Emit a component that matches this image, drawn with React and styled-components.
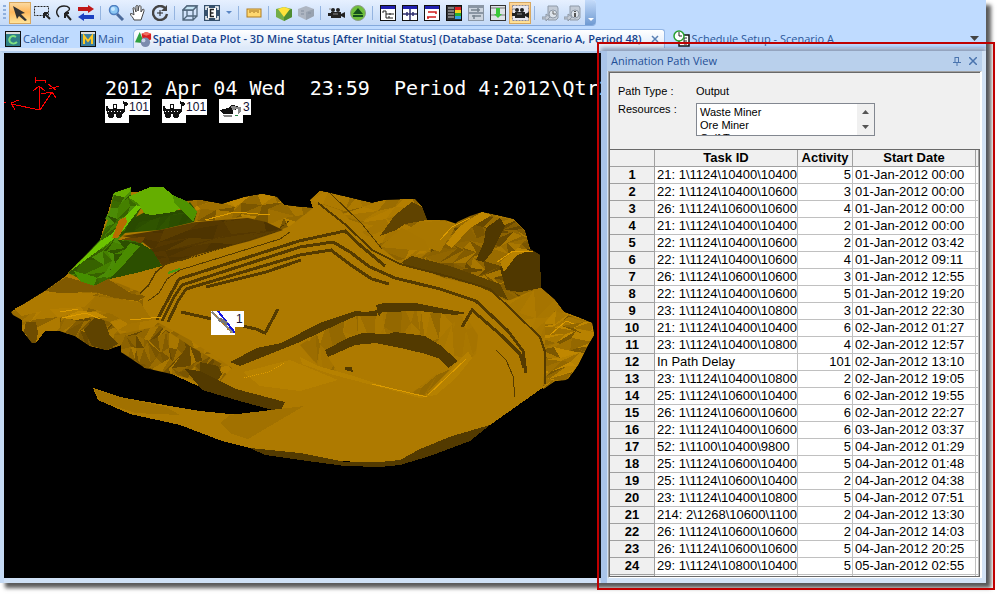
import React, { useState } from "react";
import styled, { createGlobalStyle } from 'styled-components';

const rows = [
  ["21: 1\\1124\\10400\\10400", 5, "01-Jan-2012 00:00"],
  ["22: 1\\1124\\10400\\10600", 3, "01-Jan-2012 00:00"],
  ["26: 1\\1124\\10600\\10600", 4, "01-Jan-2012 00:00"],
  ["21: 1\\1124\\10400\\10400", 2, "01-Jan-2012 00:00"],
  ["22: 1\\1124\\10400\\10600", 2, "01-Jan-2012 03:42"],
  ["22: 1\\1124\\10400\\10600", 4, "01-Jan-2012 09:11"],
  ["26: 1\\1124\\10600\\10600", 3, "01-Jan-2012 12:55"],
  ["22: 1\\1124\\10400\\10600", 5, "01-Jan-2012 19:20"],
  ["23: 1\\1124\\10400\\10800", 3, "01-Jan-2012 22:30"],
  ["21: 1\\1124\\10400\\10400", 6, "02-Jan-2012 01:27"],
  ["23: 1\\1124\\10400\\10800", 4, "02-Jan-2012 12:57"],
  ["In Path Delay", 101, "02-Jan-2012 13:10"],
  ["23: 1\\1124\\10400\\10800", 2, "02-Jan-2012 19:05"],
  ["25: 1\\1124\\10600\\10400", 6, "02-Jan-2012 19:55"],
  ["26: 1\\1124\\10600\\10600", 6, "02-Jan-2012 22:27"],
  ["22: 1\\1124\\10400\\10600", 6, "03-Jan-2012 03:37"],
  ["52: 1\\1100\\10400\\9800", 5, "04-Jan-2012 01:29"],
  ["25: 1\\1124\\10600\\10400", 5, "04-Jan-2012 01:48"],
  ["25: 1\\1124\\10600\\10400", 2, "04-Jan-2012 04:38"],
  ["23: 1\\1124\\10400\\10800", 5, "04-Jan-2012 07:51"],
  ["214: 2\\1268\\10600\\1100", 2, "04-Jan-2012 13:30"],
  ["26: 1\\1124\\10600\\10600", 2, "04-Jan-2012 14:03"],
  ["26: 1\\1124\\10600\\10600", 5, "04-Jan-2012 20:25"],
  ["29: 1\\1124\\10800\\10400", 5, "05-Jan-2012 02:55"],
]

const CameraShape = () => (
  <g fill="#222">
    <circle cx="5" cy="5" r="2" /><circle cx="10" cy="5" r="2" />
    <rect x="3" y="7" width="10" height="6" /><path d="M13 9l4-2v6l-4-2z" /><rect x="0" y="8" width="3" height="3" />
    <path d="M1 4h2M5 9h5" stroke="#888" />
  </g>
)

const WindowShape = ({ children, bar = "#2020b0" }) => (
  <g>
    <rect x=".5" y=".5" width="15" height="15" fill="#fff" stroke="#111" />
    <rect x="1" y="1" width="14" height="3" fill={bar} />
    {children}
  </g>
)

const GreyServer = ({ children }) => (
  <g fill="#c3cbd6" stroke="#8f9aa8">
    <path d="M6 1h9l1 2v10l-2 2H6z" /><path d="M0 12h4V9l4 3-4 4v-2H0z" />
    <circle cx="11" cy="9" r="4" fill="#dde3ea" />{children}
  </g>
)

const icons = {
  select: <path d="M1 1l12 7-4 1 6 6-2 1-6-5-2 3z" fill="#333" />,
  marquee: <g fill="none" stroke="#222"><rect x=".5" y="1.5" width="14" height="9" strokeDasharray="2 1" /><path d="M10 8l6 6M10 8v5M10 8h4" strokeWidth="2" /></g>,
  lasso: <g fill="none" stroke="#222"><path d="M3 12C-2 7 2 1 8 1c5 0 7 3 4 5l-3 2" strokeWidth="1.4" /><path d="M9 8l6 7M9 8v5M9 8h4" strokeWidth="2" /></g>,
  swap: <g><path d="M0 2h10V0l6 4-6 4V6H0z" fill="#c01818" /><path d="M16 10H6V8l-6 4 6 4v-2h10z" fill="#1b3fc0" /></g>,
  zoom: <g><path d="M9 9l6 6" stroke="#4b6a9a" strokeWidth="3" /><circle cx="6" cy="5" r="4.5" fill="#8cc8f4" stroke="#4f7fc0" strokeWidth="1.5" /><circle cx="5" cy="4" r="2" fill="#c8e8ff" /></g>,
  pan: <path d="M4 15c-1-3-3-4-4-6 1-1 3 0 4 1L3 3c1-1 2 0 2 1l1 3V1c1-1 2-1 2 0v5l1-5c1-1 2 0 2 1v5l2-3c1 0 1 1 1 2l-2 6-1 3z" fill="#fff" stroke="#444" />,
  orbit: <g fill="none" stroke="#444"><path d="M13 3A7 7 0 1 0 15 9" strokeWidth="2.4" /><path d="M15 0v6H9z" fill="#444" stroke="none" /><path d="M8 5v6M5 8h6" stroke="#222" /></g>,
  cube: <g fill="none" stroke="#51677c" strokeWidth="1.3"><path d="M1 5h10v10H1zM5 1h10v10H5zM1 5l4-4M11 5l4-4M11 15l4-4M1 15l4-4" /><path d="M5 1h10l-4 4H1z" fill="#c4e4f4" /></g>,
  extent: <g><rect width="16" height="16" fill="#35506c" /><path d="M2 5V2h3M11 2h3v3M14 11v3h-3M5 14H2v-3" stroke="#fff" fill="none" strokeWidth="1.5" /><rect x="4" y="3" width="8" height="10" fill="#fff" /><path d="M10 4.500H6.500v7H10M6 8h3.500" stroke="#222" strokeWidth="1.5" fill="none" /></g>,
  ruler: <g><rect x="1" y="4" width="14" height="8" fill="#ffd870" stroke="#b07c20" /><path d="M4 5v3M6 5v2M8 5v3M10 5v2M12 5v3" stroke="#a07020" /></g>,
  block: <g><path d="M0 4l8-2 8 2v8l-8 4-8-4z" fill="#73ad48" /><path d="M8 7l8-3v8l-8 4z" fill="#4e8d33" /><path d="M2 4l6-2 6 2-6 8z" fill="#ffe23a" /></g>,
  greyBlock: <g><path d="M0 4l8-3 8 3v7l-8 4-8-4z" fill="#aeb6c2" /><path d="M8 7l8-3v7l-8 4z" fill="#98a2b0" /><path d="M3 6h3M3 9h3M10 8h3" stroke="#838e9e" /></g>,
  camera: <CameraShape />,
  eject: <g><circle cx="8" cy="8" r="7.500" fill="#6fbf3c" stroke="#8c9c88" /><path d="M8 3l5 6H3zM3 10h10v2H3z" fill="#14501c" /></g>,
  tree: <WindowShape><path d="M3 6h3v3h5M6 9v4h7M3 6v2M9 9h5M9 11v2" stroke="#222" fill="none" /></WindowShape>,
  split: <WindowShape><path d="M8 4v11M1 9h14M5 7v4M11 7v4" stroke="#303070" fill="none" strokeWidth="1.5" /></WindowShape>,
  route: <WindowShape><path d="M4 7h8v2M12 12H4v2M3 12h9" stroke="#d01c1c" fill="none" strokeWidth="1.5" /></WindowShape>,
  legend: <g><rect x=".5" y=".5" width="15" height="15" fill="#333" stroke="#111" /><path d="M2 3h6M2 6h6M2 9h6M2 12h6" stroke="#ccc" /><path d="M9 2h6v3H9z" fill="#e02020" /><path d="M9 5h6v3H9z" fill="#f4d020" /><path d="M9 8h6v3H9z" fill="#28b030" /><path d="M9 11h6v3H9z" fill="#30a0e0" /></g>,
  greyWin: <g><rect x=".5" y=".5" width="15" height="15" fill="#ccd4de" stroke="#8a96a4" /><path d="M1 2h14M1 8h14" stroke="#8a96a4" strokeWidth="2" /><path d="M3 5h9M4 11h9M10 3v4M6 10v4" stroke="#76828f" strokeWidth="1.5" /></g>,
  download: <g><rect x=".5" y=".5" width="15" height="15" fill="#dde2e6" stroke="#333" /><path d="M1 3h14M1 10h14" stroke="#777" /><path d="M6 3h4v6h2l-4 4-4-4h2z" fill="#3ac838" /></g>,
  animate: <g><rect x=".5" y=".5" width="16" height="15" fill="#e8e8f0" stroke="#889" strokeDasharray="2 1" /><CameraShape /></g>,
  clock: <GreyServer><path d="M11 6v3h3" stroke="#666" fill="none" /></GreyServer>,
  info: <GreyServer><path d="M11 6v1M11 8v4" stroke="#555" strokeWidth="2" /></GreyServer>,
}

const toolGroups = [
  ["select", "marquee", "lasso", "swap"],
  ["zoom", "pan", "orbit"],
  ["cube", "extent", "more"],
  ["ruler"],
  ["block", "greyBlock"],
  ["camera", "eject"],
  ["tree", "split", "route", "legend", "greyWin", "download", "animate"],
  ["clock", "info"],
]

// small seeded generator so the mesh keeps the same facets on every render
const makeRandom = (seed) => () => {
  seed = (seed * 16807) % 2147483647
  return seed / 2147483647
}

const makeFacets = (x0, y0, x1, y1, w, h, skew, palette, seed) => {
  const rand = makeRandom(seed)
  const cols = Math.ceil((x1 - x0) / w) + 1
  const lines = Math.ceil((y1 - y0) / h) + 1
  const pts = []
  for (let j = 0; j <= lines; j++) {
    const line = []
    for (let i = -2; i <= cols + 2; i++) {
      line.push([
        Math.round(x0 + i * w + (rand() - 0.5) * w - (j * h * skew) % (w * 2)),
        Math.round(y0 + (j - 0.5) * h + (rand() - 0.5) * h),
      ])
    }
    pts.push(line)
  }
  const out = []
  for (let j = 0; j < lines; j++) {
    for (let i = 0; i < pts[0].length - 1; i++) {
      const [a, b, c, d] = [pts[j][i], pts[j][i + 1], pts[j + 1][i + 1], pts[j + 1][i]]
      out.push({ points: [a, b, d].join(" "), fill: palette[Math.floor(rand() * palette.length)] })
      out.push({ points: [b, c, d].join(" "), fill: palette[Math.floor(rand() * palette.length)] })
    }
  }
  return out
}

const ochre = ["#ae7a00", "#ae7a00", "#a67400", "#9a6c00", "#8e6300", "#b47e00"]
const umber = ["#7a5500", "#8c6200", "#845c00", "#9a6c00", "#a97700", "#694900", "#926600"]
const ridge = ["#a97700", "#b88200", "#946800", "#a07000", "#7c5700", "#c08700"]
const slope = ["#a97700", "#ae7a00", "#a67400", "#b07c00"]
const wall = ["#a97700", "#9c6d00", "#a67400", "#946800", "#ae7a00"]
const moss = ["#2f5400", "#3a6a00", "#458000", "#4b8c06", "#376200"]
const deepMoss = ["#294a00", "#2f5400", "#2b4e00"]
const earth = ["#553800", "#4e3400", "#5c3e00"]

const meshes = [
  { id: "west", area: "11,312 45,291 66,276 95,286 108,279 140,292 145,302 157,322 190,340 220,360 232,368 214,388 180,376 165,370 145,368 133,357 121,352 121,345 107,350 90,346 75,336 60,331 45,331 36,335 36,343 32,343 22,330 22,320 13,315", box: [10, 272, 235, 392], cell: [21, 11], skew: 0.4, palette: ochre, seed: 71 },
  { id: "westlow", area: "60,318 78,312 92,316 110,322 120,334 160,326 190,346 222,364 215,386 180,376 145,368 121,352 121,345 107,350 90,346 75,336 60,331", box: [50, 306, 230, 392], cell: [7, 12], skew: 0.7, palette: umber, seed: 913 },
  { id: "north", area: "175,197 186,201 200,200 222,204 245,197 262,194 277,197 284,205 300,207 313,208 290,226 280,230 265,223 245,216 225,220 195,223 190,210", box: [174, 190, 315, 232], cell: [15, 9], skew: 0.2, palette: ridge, seed: 37 },
  { id: "crest", area: "310,200 320,191 330,193 355,199 372,203 385,200 415,199 422,207 427,220 445,220 457,224 440,250 430,268 400,263 384,250 360,230 340,210", box: [308, 188, 460, 270], cell: [17, 12], skew: 0.8, palette: ochre, seed: 411 },
  { id: "mountain", area: "430,250 450,232 457,222 470,216 482,212 500,216 513,219 525,231 530,249 540,255 540,287 555,300 520,306 505,300 480,286 445,278 412,266", box: [410, 208, 558, 310], cell: [11, 8], skew: 1.4, palette: umber, seed: 58 },
  { id: "east", area: "540,287 555,300 564,312 580,318 592,323 594,335 588,345 578,365 568,379 555,381 543,389 545,360 540,340 506,302", box: [505, 285, 596, 392], cell: [22, 17], skew: 0.5, palette: slope, seed: 600 },
  { id: "scree", area: "545,322 555,311 592,323 594,335 588,345 578,365 566,380 555,381 543,389 545,350", box: [540, 310, 596, 392], cell: [12, 7], skew: 1, palette: ridge, seed: 29 },
  { id: "pitwall", area: "300,345 335,323 356,316 378,312 380,307 402,303 440,311 466,317 478,335 476,354 460,366 428,396 412,393 452,362 440,344 424,337 390,334 362,333 326,354 338,373 318,366", box: [298, 300, 480, 398], cell: [10, 22], skew: 0.7, palette: wall, seed: 82 },
  { id: "greenhill", area: "68,273 100,240 108,220 105,219 110,210 113,195 114,193 131,187 131,197 142,206 130,228 118,240 145,240 112,278 96,286", box: [66, 186, 146, 288], cell: [9, 9], skew: 0.9, palette: moss, seed: 15 },
  { id: "greenface", area: "130,220 145,212 180,210 190,202 197,212 194,222 160,230 124,233", box: [120, 200, 200, 236], cell: [10, 12], skew: 0.4, palette: deepMoss, seed: 9 },
  { id: "valley", area: "122,236 160,230 196,222 248,218 266,222 283,230 250,241 200,254 162,266 150,248 140,240", box: [120, 216, 285, 268], cell: [24, 9], skew: 0.5, palette: earth, seed: 77 },
]

const facets = meshes.map(m => ({ ...m, tris: makeFacets(...m.box, ...m.cell, m.skew, m.palette, m.seed) }))

const Terrain = () => (
  <TerrainSvg viewBox="4 53 597 525" preserveAspectRatio="xMinYMin slice" shapeRendering="crispEdges" aria-hidden="true">
    <defs>
      {facets.map(m => <clipPath id={m.id} key={m.id}><polygon points={m.area} /></clipPath>)}
    </defs>
    <polygon fill="#ae7a00" points="11,312 45,291 66,276 68,273 100,240 113,195 150,190 186,201 200,200 222,204 245,197 262,194 277,197 284,205 300,207 313,208 310,200 320,191 330,193 355,199 372,203 385,200 415,199 422,207 427,220 457,224 470,218 482,212 513,219 525,231 530,249 540,255 540,287 555,300 564,312 580,318 592,323 594,335 588,345 578,365 568,379 555,381 541,389 490,425 470,441 430,456 400,463 380,463 340,461 300,457 250,448 222,441 180,425 130,414 98,400 93,388 120,397 170,406 200,411 240,415 278,417 285,402 245,396 200,387 163,370 145,368 133,357 121,352 121,345 107,350 90,346 75,336 60,331 45,331 36,343 32,343 22,330 22,320" />
    {facets.map(m => (
      <g clipPath={`url(#${m.id})`} key={m.id}>
        {m.tris.map((t, i) => <polygon key={i} points={t.points} fill={t.fill} />)}
      </g>
    ))}
    {/* broad light and shade over the mesh */}
    <g>
      <polygon fill="#805900" points="45,291 66,277 96,285 108,279 132,294 146,296 138,301 115,298 95,292 60,293" />
      <polygon fill="#ae7a00" points="14,309 44,294 60,294 95,296 84,307 50,309 22,316" />
      <polygon fill="#a37200" points="95,296 140,302 152,320 128,324 112,314 88,308" />
      <polygon fill="#c48a00" points="62,318 78,311 96,312 108,318 92,317 76,320" />
      <polygon fill="#5f4300" points="84,330 94,318 104,320 110,336 118,344 107,350 92,346" />
      <polygon fill="#6f4d00" points="26,322 36,322 38,333 36,343 32,343 24,332" />
      <polygon fill="#5c4100" points="200,362 218,366 222,374 214,386 200,380" />
      <polygon fill="#604300" points="395,215 412,202 422,207 427,220 405,224 396,230 380,236" />
      <polygon fill="#a97700" points="405,232 418,222 445,221 456,226 440,252 404,240" />
      <polygon fill="#a87600" points="380,247 402,228 425,240 430,252 412,250" />
      <polygon fill="#503800" points="486,228 500,218 505,226 492,252 484,262 476,260 484,242" />
      <polygon fill="#503800" points="500,268 512,252 530,249 540,255 541,288 520,292 506,290" />
      <polygon fill="#5f4300" points="402,262 412,256 450,266 500,284 508,300 480,287 450,277 405,266" />
      <polygon fill="#c08700" points="470,219 482,212 492,215 470,228 452,248 446,244 458,228" />
      <polygon fill="#b88200" points="500,262 518,248 530,250 516,256 504,272" />
    </g>
    {/* waste dump */}
    <g>
      <polygon fill="#65ae00" points="114,193 131,187 130,192 124,197 113,195" />
      <polygon fill="#65ae00" points="128,197 150,187 163,187 173,195 174,203 182,207 174,212 152,215 145,214 138,203" />
      <polygon fill="#4e9200" points="173,195 186,201 197,212 193,222 182,210 174,203" />
      <polygon fill="#6cc400" points="136,205 141,207 134,216 122,232 115,238 68,273 100,241 112,234 122,220" />
      <polygon fill="#b86c00" points="119,220 126,217 127,222 118,238 112,238" />
      <polygon fill="#6e4600" points="118,239 145,237 141,244 135,241" />
      <polygon fill="#2c4f00" points="118,240 140,243 152,250 162,266 140,272 110,279 130,256" />
      <polygon fill="#4a8c00" points="130,243 140,246 126,262 112,276 106,278 116,262" />
      <polygon fill="#459000" points="74,271 96,277 94,286 80,281" />
      <path d="M168 273l12-4" stroke="#4a9a10" strokeWidth="2" />
    </g>
    {/* highwall and ramp */}
    <g fill="none" stroke="#553b00">
      <path d="M140 293l8-7 8-14 10-8 24-7" strokeWidth="1.5" />
      <path d="M148 301l11-8 8-14 13-9 100-31 10-7" />
      <path d="M181 261l9-3 85-26 15-12" strokeDasharray="2 1" />
      <path d="M157 320l16-30 6-11 120-38 46-10 16 15 24 20" strokeWidth="3" />
      <path d="M162 321l12-24 8-12 118-38 33-5 17 10 20 15 25 11 45 11 36 12 32 30 15 20 3 22" strokeWidth="3" />
      <path d="M168 322l10-21 8-12 114-34 31-5 21 16 20 13 17 5" strokeWidth="3" />
      <path d="M206 287l60-15 35-12" strokeWidth="3" />
      <path d="M318 203l28 22 26 25 28 14 50 13 40 12 50 48 5 15v32" strokeWidth="2" />
      <path d="M330 193l32 31 20 25" />
      <path d="M462 327l10-17 30 26 18 18 4 14" strokeWidth="3" />
      <path d="M496 350l10 10 7 16 2 21" />
      <path d="M181 312l75 17 9 4 13-24" strokeWidth="3" />
    </g>
    {/* pit */}
    <g fill="#533a00">
      <polygon points="230,362 257,348 281,343 320,323 355,311 366,312 378,310 377,316 356,316 338,324 300,342 270,354 240,366" />
      <polygon points="376,305 384,303 415,303 440,308 467,313 455,315 420,311 382,312 379,317" />
      <polygon points="325,350 350,337 362,333 388,334 395,332 425,336 440,345 458,361 448,368 440,359 426,354 405,349 376,343 355,345 328,357" />
      <polygon points="185,369 200,371 236,389 285,402 280,412 243,402 202,390" />
      <polygon points="250,448 300,453 345,462 380,462 400,460 420,449 452,436 490,425 470,441 430,456 400,465 380,467 345,466 300,460 265,455" />
      <polygon points="345,367 352,367 353,372 345,370" />
    </g>
    <g fill="#b68100">
      <polygon points="300,357 318,366 350,375 396,390 426,396 468,351 472,358 456,378 436,395 420,398 372,385 330,374 302,364" />
      <polygon points="243,372 290,360 338,380 300,391 260,386" />
    </g>
    <g fill="none" stroke="#dc9b00">
      <path d="M428 395l38-36M372 384l55 13M130 320l32-3M62 318l24-5 14 6M60 312l18-3" />
      <path d="M244 378l24-6 16-9" strokeDasharray="1 1" />
      <path d="M205 220l30-8 35 3M440 240l12-13 18-9M497 262l16-11 20 1M550 335l16-14 8 3" />
    </g>
    <polygon fill="#a17100" points="220,423 230,415 304,406 248,439 232,434" />
    <polygon fill="#a17100" points="94,389 120,397 166,407 180,415 135,413 100,401" />
    {/* axes */}
    <g fill="none" stroke="#f00">
      <path d="M39 110V87M33 91l6-5 6 5M40 110L11 104M19 100l-8 3 4 7M4 102h2M40 110l12-18M41 94l11-2 4 6M35 77v6M36 80h9v3M48 84l8 6M49 89l10-3" />
    </g>
  </TerrainSvg>
)

const Truck = () => (
  <svg width="24" height="24" viewBox="0 0 24 24" shapeRendering="crispEdges">
    <path fill="#111" d="M1 7h2l1 3h4V5h4v5h7V5h-1V2l5 2v2l-3 1v5l-2 3H2v-3H1z" />
    <path fill="#fff" d="M9 6h2v3H9z" />
    <path d="M3 12h14" stroke="#fff" strokeDasharray="1 2" />
    <circle cx="6" cy="16" r="3" fill="#111" /><circle cx="14" cy="16" r="3" fill="#111" />
  </svg>
)

const Shovel = () => (
  <svg width="24" height="24" viewBox="0 0 24 24" shapeRendering="crispEdges">
    <path fill="#111" d="M1 11l8-2 4-3 6 1v3l-5 1v4H4z" /><path fill="#888" d="M12 7l10 1v5l-3 2v-5l-6 1zM3 16h10v2H5z" /><path d="M16 16h3" stroke="#284" />
  </svg>
)

const Drill = () => (
  <svg width="24" height="24" viewBox="0 0 24 24" shapeRendering="crispEdges">
    <path d="M1 1l21 21" stroke="#888" strokeWidth="2" /><path d="M7 0l17 22" stroke="#1414e0" strokeWidth="2" /><path d="M8 8l8 5" stroke="#777" strokeWidth="4" /><path d="M4 3l16 19" stroke="#b87c20" strokeDasharray="3 3" />
  </svg>
)

const App = () => {
  const [tab, setTab] = useState("plot")

  return (
    <Screen>
      <GlobalStyle />
      <Window>
        <ToolBar role="toolbar" aria-label="View tools">
          <Grip />
          {toolGroups.map((group, index) => (
            <ToolGroup key={index}>
              {group.map(name => name === "more"
                ? <MoreButton key={name} aria-label="More"><Caret /></MoreButton>
                : (
                  <ToolButton key={name} aria-label={name} $active={name === "select" || name === "animate"}>
                    <svg width="17" height="16" viewBox="0 0 17 16">{icons[name]}</svg>
                  </ToolButton>
                ))}
            </ToolGroup>
          ))}
          <Overflow aria-label="Toolbar options"><Caret $light /></Overflow>
        </ToolBar>

        <TabBar role="tablist">
          <Tab role="tab" onClick={() => setTab("calendar")}>
            <svg width="16" height="16" viewBox="0 0 16 16"><rect x=".5" y=".5" width="15" height="15" fill="#2f7f86" stroke="#111" /><path d="M1 2h14" stroke="#ddd" strokeWidth="2" /><path d="M11 6C6 3 3 8 5 11c2 2 5 2 7 0" stroke="#7de080" strokeWidth="2" fill="none" /></svg>
            Calendar
          </Tab>
          <Tab role="tab" $gap onClick={() => setTab("main")}>
            <svg width="16" height="16" viewBox="0 0 16 16"><rect x=".5" y=".5" width="15" height="15" fill="#3d7f9c" stroke="#111" /><path d="M1 2h14" stroke="#ddd" strokeWidth="2" /><path d="M4 13V5l4 5 4-5v8" stroke="#ffc820" strokeWidth="2" fill="none" /></svg>
            Main
          </Tab>
          <ActiveTab role="tab" aria-selected={tab === "plot"} onClick={() => setTab("plot")}>
            <svg width="17" height="17" viewBox="0 0 18 18"><path d="M5 1l5 12-10-1z" fill="#2fa040" /><path d="M7 3l5-2 5 2v6l-5 2-4-2z" fill="#d82020" /><path d="M7 3l5-2 5 2-5 2z" fill="#f07060" /><circle cx="11" cy="12" r="5" fill="#7c8cae" /><circle cx="9" cy="10" r="2" fill="#c8d2e6" /></svg>
            <span>Spatial Data Plot - 3D Mine Status [After Initial Status] (Database Data: Scenario A, Period 48)</span>
            <svg width="8" height="8" viewBox="0 0 8 8"><path d="M1 1l6 6M7 1L1 7" stroke="#5a80b4" strokeWidth="1.5" /></svg>
          </ActiveTab>
          <Tab role="tab" onClick={() => setTab("schedule")}>
            <svg width="17" height="17" viewBox="0 0 17 17"><rect x="6" y="5" width="10" height="11" fill="#fff" stroke="#111" strokeWidth="1.5" /><path d="M14 8h-3v6h3M11 11h3" stroke="#222" fill="none" /><circle cx="6" cy="6" r="5" fill="#fff" stroke="#28a030" strokeWidth="1.5" /><path d="M6 2v4h3" stroke="#222" fill="none" /></svg>
            Schedule Setup - Scenario A
          </Tab>
          <TabMenu aria-label="Window list"><svg width="9" height="5" viewBox="0 0 9 5"><path d="M0 0h9L4.500 5z" fill="#444" /></svg></TabMenu>
        </TabBar>

        <Workspace>
          <Viewport>
            <Terrain />
            <Readout>
              <Clock>{"2012 Apr 04 Wed  23:59  Period 4:2012\\Qtr2"}</Clock>
              <Fleet>
                <Unit><Truck /><span>101</span></Unit>
                <Unit><Truck /><span>101</span></Unit>
                <Unit><Shovel /><span>3</span></Unit>
              </Fleet>
            </Readout>
            <DrillUnit><Drill /><span>1</span></DrillUnit>
          </Viewport>

          <Dock>
            <DockHead>
              <h2>Animation Path View</h2>
              <button aria-label="Pin"><svg width="8" height="9" viewBox="0 0 8 9"><path d="M2 0v5M5.500 0v5M2 .5h4M0 5.500h8M4 6v3" stroke="#4a74ae" fill="none" /></svg></button>
              <button aria-label="Close"><svg width="8" height="8" viewBox="0 0 8 8"><path d="M0 0l8 8M8 0L0 8" stroke="#4a74ae" strokeWidth="1.5" /></svg></button>
            </DockHead>
            <DockBody>
              <Form>
                <span>Path Type :</span>
                <span>Output</span>
                <label htmlFor="resources">Resources :</label>
                <ListBox>
                  <select id="resources" multiple size="3">
                    <option>Waste Miner</option>
                    <option>Ore Miner</option>
                    <option>Golf T</option>
                  </select>
                  <Scroller>
                    <button aria-label="Scroll up"><svg width="7" height="4" viewBox="0 0 7 4"><path d="M0 4h7L3.500 0z" fill="#555" /></svg></button>
                    <button aria-label="Scroll down"><svg width="7" height="4" viewBox="0 0 7 4"><path d="M0 0h7L3.500 4z" fill="#555" /></svg></button>
                  </Scroller>
                </ListBox>
              </Form>
              <GridBox>
                <PathTable>
                  <colgroup>
                    <col width="45" /><col width="143" /><col width="55" /><col width="123" /><col />
                  </colgroup>
                  <thead>
                    <tr><th></th><th>Task ID</th><th>Activity</th><th>Start Date</th><th></th></tr>
                  </thead>
                  <tbody>
                    {rows.map(([task, activity, start], index) => (
                      <tr key={index}>
                        <th scope="row">{index + 1}</th>
                        <td>{task}</td>
                        <td className="num">{activity}</td>
                        <td>{start}</td>
                        <td></td>
                      </tr>
                    ))}
                    <tr><th></th><td></td><td></td><td></td><td></td></tr>
                  </tbody>
                </PathTable>
              </GridBox>
            </DockBody>
            <Highlight />
          </Dock>
        </Workspace>
      </Window>
    </Screen>
  )
}

const GlobalStyle = createGlobalStyle`
  *{
    box-sizing: border-box;
  }
  body{
    margin: 0;
    background: #fff;
    overflow: hidden;
  }
  button{
    border: 0;
    padding: 0;
    margin: 0;
    background: none;
    font: inherit;
    color: inherit;
  }
  svg{
    display: block;
    flex: none;
  }
`;

const Screen = styled.div`
  height: 100vh;
  padding: 0 16px 15px 0;
  font-family: "Open Sans", sans-serif;
`;

const Window = styled.div`
  height: 100%;
  display: flex;
  flex-direction: column;
  background: #bfdbff;
  box-shadow: 5px 5px 4px rgba(0, 0, 0, 0.65);
`;

const ToolBar = styled.div`
  align-self: flex-start;
  height: 26px;
  display: flex;
  align-items: center;
  background: linear-gradient(#e6f0ff, #d3e4fb 50%, #c3d9f7);
  border-bottom: 1px solid #84a9dc;
  border-radius: 0 4px 4px 0;
`;

const Grip = styled.div`
  width: 3px;
  height: 16px;
  margin: 0 3px;
  background: repeating-linear-gradient(#8fb0de 0 2px, transparent 2px 4px);
`;

const ToolGroup = styled.div`
  display: flex;
  align-items: center;
  & + &::before{
    content: "";
    width: 1px;
    height: 14px;
    margin: 0 4px 0 3px;
    background: #94b4e0;
  }
`;

const ToolButton = styled.button`
  width: 22px;
  height: 22px;
  display: flex;
  align-items: center;
  justify-content: center;
  border: 1px solid ${({ $active }) => $active ? "#d8a860" : "transparent"};
  background: ${({ $active }) => $active ? "linear-gradient(#fbd9a0, #ffb85c 45%, #ffe49a)" : "none"};
`;

const MoreButton = styled.button`
  width: 12px;
  height: 22px;
  display: flex;
  align-items: center;
  justify-content: center;
`;

const Caret = styled.i`
  border: 3px solid transparent;
  border-top-color: ${({ $light }) => $light ? "#fff" : "#5a86c4"};
  border-bottom: 0;
`;

const Overflow = styled.button`
  width: 11px;
  height: 25px;
  display: flex;
  align-items: flex-end;
  justify-content: center;
  margin-left: 2px;
  padding-bottom: 4px;
  background: linear-gradient(#c4dbfa, #6f9ad2);
  border-radius: 0 4px 4px 0;
`;

const TabBar = styled.div`
  flex: none;
  height: 25px;
  display: flex;
  align-items: center;
  padding: 3px 7px 0 5px;
  border-bottom: 3px solid #dde9f9;
  font-size: 11px;
  line-height: 16px;
  color: #2a5699;
`;

const Tab = styled.button`
  display: flex;
  align-items: center;
  gap: 2px;
  margin-left: ${({ $gap }) => $gap ? "11px" : "0"};
  white-space: nowrap;
`;

const ActiveTab = styled.button`
  height: 19px;
  display: flex;
  align-items: center;
  gap: 1px;
  margin: 0 8px 0 9px;
  padding: 0 5px 0 1px;
  border: 1px solid #93b6e6;
  border-bottom: 0;
  border-radius: 5px 3px 0 0;
  background: linear-gradient(#fff, #dde9f9);
  font-weight: 600;
  white-space: nowrap;
  color: #15428b;
  span{
    flex: 1;
    margin-right: 8px;
  }
`;

const TabMenu = styled.button`
  margin-left: auto;
`;

const Workspace = styled.div`
  flex: 1;
  min-height: 0;
  display: flex;
  border-top: 2px solid #b3cdec;
  border-left: 4px solid #c5daf4;
`;

const Viewport = styled.div`
  flex: 1;
  min-width: 0;
  position: relative;
  overflow: hidden;
  background: #000;
  border-bottom: 5px solid #cfe1f6;
`;

const TerrainSvg = styled.svg`
  position: absolute;
  inset: 0;
  width: 100%;
  height: 100%;
`;

const Readout = styled.div`
  position: relative;
  padding: 24px 0 0 101px;
`;

const Clock = styled.div`
  font-family: "DejaVu Sans Mono", monospace;
  font-size: 20px;
  line-height: 22px;
  white-space: pre;
  color: #fff;
`;

const Fleet = styled.div`
  display: flex;
  gap: 12px;
`;

const Unit = styled.div`
  display: flex;
  align-items: flex-start;
  svg{
    background: #fff;
  }
  span{
    height: 16px;
    padding: 0 1px 0 0;
    background: #fff;
    font-family: "Liberation Sans", Arial, sans-serif;
    font-size: 12px;
    line-height: 16px;
    color: #101030;
  }
`;

// the drill sits on the bench it is working
const DrillUnit = styled(Unit)`
  position: absolute;
  left: 207px;
  top: 258px;
  span{
    padding: 0 1px;
  }
`;

const Dock = styled.section`
  flex: 0 0 385px;
  position: relative;
  display: flex;
  flex-direction: column;
  padding: 0 4px 5px 0;
  border-left: 6px solid #a9c4e9;
  background: #d3e3f6;
  margin-top: -2px;
  box-shadow: 0 -3px 4px rgba(60, 80, 120, 0.5);
`;

const DockHead = styled.header`
  flex: none;
  height: 20px;
  display: flex;
  align-items: center;
  gap: 8px;
  padding: 0 5px 0 4px;
  background: #b9d0ec;
  h2{
    flex: 1;
    margin: 0;
    font-size: 11px;
    font-weight: 400;
    line-height: 20px;
    color: #1f4f96;
  }
`;

const DockBody = styled.div`
  flex: 1;
  min-height: 0;
  display: flex;
  flex-direction: column;
  margin-left: 1px;
  border: 1px solid #a0a0a0;
  border-right: 2px solid #fff;
  border-bottom: 1px solid #fff;
  background: #f0f0f0;
  font-family: "Liberation Sans", Arial, sans-serif;
`;

const Form = styled.div`
  display: grid;
  grid-template-columns: 78px 179px;
  padding: 12px 0 13px 8px;
  border-top: 1px solid #696969;
  border-left: 1px solid #696969;
  font-size: 11px;
  line-height: 13px;
  row-gap: 5px;
  color: #000;
`;

const ListBox = styled.div`
  height: 33px;
  display: flex;
  border: 1px solid #828790;
  background: #fff;
  overflow: hidden;
  select{
    flex: 1;
    height: 44px;
    padding: 2px 0 0 0;
    border: 0;
    outline: 0;
    overflow: hidden;
    background: #fff;
    font-family: inherit;
    font-size: 11px;
  }
  option{
    min-height: 13px;
    padding: 0 3px;
    line-height: 13px;
    color: #000;
  }
`;

const Scroller = styled.div`
  width: 17px;
  display: flex;
  flex-direction: column;
  background: #f0f0f0;
  button{
    flex: 1;
    display: flex;
    align-items: center;
    justify-content: center;
  }
`;

const GridBox = styled.div`
  flex: 1;
  min-height: 0;
  overflow: hidden;
  border: 1px solid #696969;
  background: #fff;
`;

const PathTable = styled.table`
  width: 100%;
  table-layout: fixed;
  border-collapse: separate;
  border-spacing: 0;
  font-size: 13px;
  line-height: 16px;
  color: #000;
  th, td{
    height: 17px;
    padding: 0 2px;
    border-right: 1px solid #c0c0c0;
    border-bottom: 1px solid #c0c0c0;
    overflow: hidden;
    white-space: nowrap;
  }
  td{
    padding: 0 0 0 2px;
  }
  th{
    background: #f0f0f0;
    border-color: #a0a0a0;
    font-weight: 700;
  }
  .num{
    padding-right: 1px;
    text-align: right;
  }
`;

// call-out frame around the docked view
const Highlight = styled.div`
  position: absolute;
  inset: -9px -9px -7px -10px;
  border: 2px solid #c00000;
  pointer-events: none;
`;

export default App
